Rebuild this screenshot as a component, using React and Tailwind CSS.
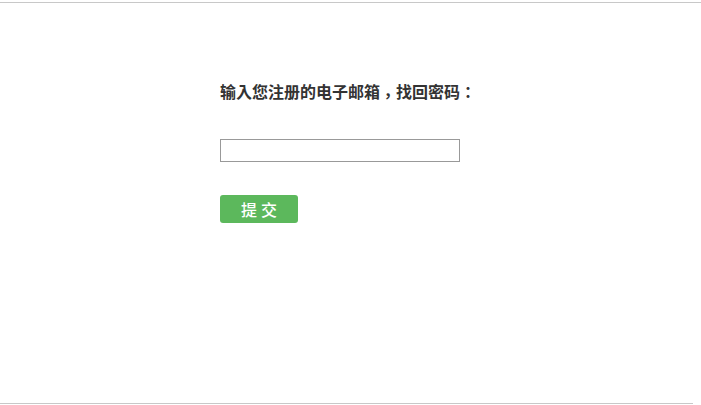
export default function App() {
  return (
    <div className="w-[701px] h-[405px] bg-white flex flex-col overflow-hidden" style={{ fontFamily: '"Noto Sans CJK SC", "Liberation Sans", sans-serif' }}>
      <div className="h-[2px] shrink-0" />
      <div className="h-px shrink-0 bg-[#c8c8c8]" />
      <div className="flex-1 pl-[220px] pt-[76px]">
        <div className="text-[16px] leading-[24px] font-bold text-[#333]" style={{ fontFamily: '"Noto Sans CJK TC", "Noto Sans CJK SC", sans-serif' }}>
          输入您注册的电子邮箱<span className="inline-block translate-y-[4px]">，</span>找回密码：
        </div>
        <input type="text" className="mt-[36px] block w-[240px] h-[23px] border border-[#999] outline-none" />
        <button className="mt-[33px] block w-[78px] h-[28px] rounded-[3px] bg-[#5cb85c] text-white text-[16px] font-medium leading-[28px] tracking-[4px] pl-[4px]">提交</button>
      </div>
      <div className="h-px shrink-0 w-[693px] bg-[#c8c8c8]" />
      <div className="h-px shrink-0" />
    </div>
  );
}
